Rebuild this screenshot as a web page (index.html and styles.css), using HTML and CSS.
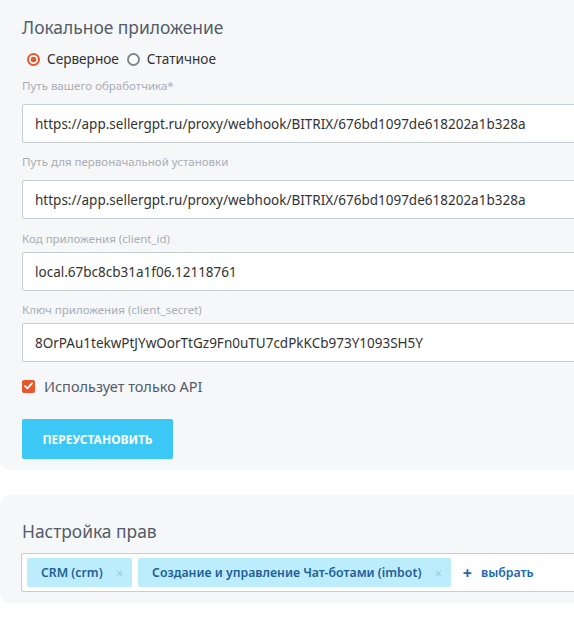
FILE: index.html
```html
<!DOCTYPE html>
<html lang="ru">
<head>
<meta charset="utf-8">
<title>Локальное приложение</title>
<link rel="stylesheet" href="styles.css">
</head>
<body>
<section class="card card--app">
  <h2 class="card-title">Локальное приложение</h2>
  <div class="radios">
    <label class="radio radio--on"><span class="radio-dot"></span>Серверное</label>
    <label class="radio"><span class="radio-dot"></span>Статичное</label>
  </div>
  <div class="field field--url">
    <div class="field-label">Путь вашего обработчика*</div>
    <div class="input">https://app.sellergpt.ru/proxy/webhook/BITRIX/676bd1097de618202a1b328a</div>
  </div>
  <div class="field field--url">
    <div class="field-label">Путь для первоначальной установки</div>
    <div class="input">https://app.sellergpt.ru/proxy/webhook/BITRIX/676bd1097de618202a1b328a</div>
  </div>
  <div class="field field--key field--gap">
    <div class="field-label">Код приложения (client_id)</div>
    <div class="input">local.67bc8cb31a1f06.12118761</div>
  </div>
  <div class="field field--key">
    <div class="field-label">Ключ приложения (client_secret)</div>
    <div class="input">8OrPAu1tekwPtJYwOorTtGz9Fn0uTU7cdPkKCb973Y1093SH5Y</div>
  </div>
  <label class="check">
    <span class="check-box"><svg width="9" height="8" viewBox="0 0 9 8"><path d="M1 4.2 L3.4 6.4 L8 1.4" fill="none" stroke="#fff" stroke-width="1.8" stroke-linecap="round" stroke-linejoin="round"/></svg></span>
    Использует только API
  </label>
  <button class="btn">Переустановить</button>
</section>

<section class="card card--rights">
  <h2 class="card-title">Настройка прав</h2>
  <div class="tags">
    <span class="tag">CRM (crm)<span class="tag-x">×</span></span>
    <span class="tag">Создание и управление Чат-ботами (imbot)<span class="tag-x">×</span></span>
    <span class="add"><span class="add-plus">+</span>выбрать</span>
  </div>
</section>
</body>
</html>
```
FILE: styles.css
```css
html, body {
  margin: 0;
  padding: 0;
  background: #fff;
  overflow: hidden;
}
body {
  font-family: "Noto Sans", "Open Sans", sans-serif;
  color: #333;
  width: 574px;
}
.card {
  background: #f5f7f8;
  border-radius: 10px;
  width: 660px;
  box-sizing: border-box;
  padding: 0 22px;
}
.card--app {
  margin-top: -10px;
  padding-top: 25px;
  padding-bottom: 11px;
}
.card--rights {
  margin-top: 25px;
  padding-top: 24px;
  padding-bottom: 11px;
}
.card-title {
  margin: 0;
  font-size: 17.4px;
  font-weight: 400;
  line-height: 24px;
  color: #535c69;
}
.radios {
  display: flex;
  gap: 8px;
  margin-top: 10px;
  padding-left: 5px;
}
.radio {
  display: flex;
  align-items: center;
  gap: 7px;
  font-size: 13.6px;
  line-height: 20px;
  color: #333;
}
.radio-dot {
  width: 13px;
  height: 13px;
  box-sizing: border-box;
  border: 2px solid #80868e;
  border-radius: 50%;
  background: #fff;
}
.radio--on .radio-dot {
  border-color: #e8572a;
  background: radial-gradient(circle, #e8572a 0 2.6px, #fff 3.2px);
}
.field {
  margin-top: 9px;
}
.field-label {
  font-size: 11.5px;
  line-height: 16px;
  color: #a9aeb5;
}
.field--url .field-label {
  margin-bottom: 10px;
}
.field--key .field-label {
  margin-bottom: 5px;
}
.field + .field {
  margin-top: 11px;
}
.field.field--gap {
  margin-top: 12px;
}
.input {
  height: 39px;
  box-sizing: border-box;
  border: 1px solid #c6cdd3;
  border-radius: 2px;
  background: #fff;
  padding: 0 12px;
  display: flex;
  align-items: center;
  font-size: 13.5px;
  color: #333;
  white-space: nowrap;
}
.check {
  display: flex;
  align-items: center;
  gap: 9px;
  margin-top: 14px;
  font-size: 14.5px;
  line-height: 20px;
  color: #535c69;
}
.check-box {
  width: 13px;
  height: 13px;
  border-radius: 2px;
  background: #e9562b;
  display: flex;
  align-items: center;
  justify-content: center;
}
.btn {
  display: block;
  margin-top: 23px;
  width: 151px;
  height: 40px;
  border: 0;
  border-radius: 2px;
  background: #3bc8f5;
  color: #fff;
  font-family: inherit;
  font-size: 12px;
  font-weight: 700;
  text-transform: uppercase;
  padding: 0;
}
.tags {
  margin-top: 10px;
  height: 39px;
  box-sizing: border-box;
  border: 1px solid #c6cdd3;
  border-radius: 2px;
  background: #fff;
  display: flex;
  align-items: center;
  gap: 6px;
  padding: 0 5px;
  margin-left: -1px;
}
.tag {
  height: 29px;
  display: flex;
  align-items: center;
  background: #bcedfc;
  border-radius: 2px;
  padding: 0 9px 0 14px;
  font-size: 12.3px;
  font-weight: 600;
  color: #1f5f98;
}
.tag-x {
  margin-left: 13px;
  font-size: 13px;
  font-weight: 400;
  color: #93cde4;
}
.add {
  display: flex;
  align-items: center;
  margin-left: 6px;
  font-size: 12.3px;
  font-weight: 600;
  color: #2067b0;
}
.add-plus {
  font-size: 16px;
  font-weight: 700;
  margin-right: 9px;
}
```
